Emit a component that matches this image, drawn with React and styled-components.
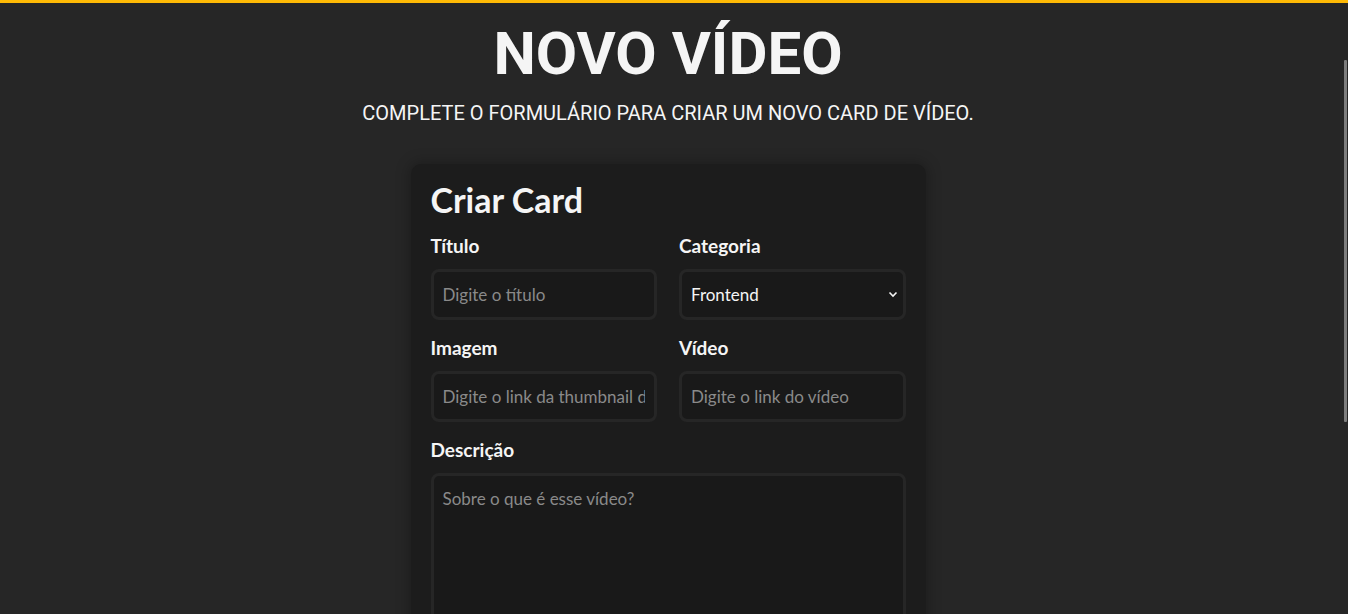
import styled, { createGlobalStyle } from "styled-components";

const GlobalStyle = createGlobalStyle`
  * {
    box-sizing: border-box;
  }

  body {
    margin: 0;
    background-color: #262626;
    color: #f5f5f5;
    font-family: "Lato", "Noto Sans", sans-serif;
  }
`;

function App() {
  return (
    <>
      <GlobalStyle />
      <Page>
        <Heading>
          <Title>NOVO VÍDEO</Title>
          <Subtitle>COMPLETE O FORMULÁRIO PARA CRIAR UM NOVO CARD DE VÍDEO.</Subtitle>
        </Heading>

        <Card>
          <CardTitle>Criar Card</CardTitle>

          <Grid>
            <Field>
              <Label>Título</Label>
              <Input placeholder="Digite o título" />
            </Field>

            <Field>
              <Label>Categoria</Label>
              <SelectWrap>
                <Select defaultValue="Frontend">
                  <option>Frontend</option>
                  <option>Backend</option>
                  <option>Mobile</option>
                </Select>
                <Chevron width="10" height="7" viewBox="0 0 10 7">
                  <path d="M1.5 1.5 L5 5 L8.5 1.5" fill="none" stroke="#f5f5f5" strokeWidth="1.6" />
                </Chevron>
              </SelectWrap>
            </Field>

            <Field>
              <Label>Imagem</Label>
              <Input placeholder="Digite o link da thumbnail do vídeo" />
            </Field>

            <Field>
              <Label>Vídeo</Label>
              <Input placeholder="Digite o link do vídeo" />
            </Field>

            <Field $wide>
              <Label>Descrição</Label>
              <TextArea placeholder="Sobre o que é esse vídeo?" />
            </Field>
          </Grid>

          <Buttons>
            <Button $primary>Guardar</Button>
            <Button>Limpar</Button>
          </Buttons>
        </Card>
      </Page>
      <ScrollThumb />
    </>
  );
}

export default App;

const Page = styled.main`
  min-height: 100vh;
  border-top: 3px solid #ffba05;
  display: flex;
  flex-direction: column;
  align-items: center;
  padding-right: 12px;
  padding-bottom: 160px;
`;

// the page's thin overlay scrollbar thumb
const ScrollThumb = styled.div`
  position: fixed;
  top: 60px;
  right: 1px;
  width: 3px;
  height: 362px;
  background-color: #7d7d7d;
  border-radius: 1px;
`;

const Heading = styled.header`
  display: flex;
  flex-direction: column;
  align-items: center;
  font-family: "Roboto", sans-serif;
`;

const Title = styled.h1`
  margin: 16px 0 0;
  font-size: 60px;
  font-weight: 700;
  line-height: 70px;
  color: #f5f5f5;
`;

const Subtitle = styled.p`
  margin: 12px 0 0;
  font-size: 20px;
  font-weight: 400;
  line-height: 24px;
  color: #f5f5f5;
`;

const Card = styled.section`
  width: 515px;
  margin-top: 39px;
  padding: 16px 20px 30px;
  background-color: #1c1c1c;
  border-radius: 10px;
  box-shadow: 0 0 14px 2px rgba(0, 0, 0, 0.25);
`;

const CardTitle = styled.h2`
  margin: 0 0 14px;
  font-size: 34px;
  font-weight: 700;
  line-height: 40px;
  color: #f5f5f5;
`;

const Grid = styled.div`
  display: grid;
  grid-template-columns: 1fr 1fr;
  column-gap: 22px;
  row-gap: 16px;
`;

const Field = styled.div`
  display: flex;
  flex-direction: column;
  gap: 11px;
  min-width: 0;
  grid-column: ${({ $wide }) => ($wide ? "1 / -1" : "auto")};
`;

const Label = styled.label`
  font-size: 19px;
  font-weight: 700;
  line-height: 24px;
  color: #f5f5f5;
`;

const Input = styled.input`
  width: 100%;
  height: 51px;
  padding: 0 9px;
  background-color: #191919;
  border: 3px solid #262626;
  border-radius: 8px;
  outline: none;
  color: #f5f5f5;
  font-family: inherit;
  font-size: 17px;

  &::placeholder {
    color: #8a8a8a;
  }
`;

const SelectWrap = styled.div`
  position: relative;
`;

const Select = styled.select`
  width: 100%;
  height: 51px;
  padding: 0 9px;
  appearance: none;
  background-color: #191919;
  border: 3px solid #262626;
  border-radius: 8px;
  outline: none;
  color: #f5f5f5;
  font-family: inherit;
  font-size: 17px;
`;

const Chevron = styled.svg`
  position: absolute;
  right: 8px;
  top: 22px;
  pointer-events: none;
`;

const TextArea = styled.textarea`
  width: 100%;
  height: 200px;
  padding: 12px 9px;
  resize: none;
  background-color: #191919;
  border: 3px solid #262626;
  border-radius: 8px;
  outline: none;
  color: #f5f5f5;
  font-family: inherit;
  font-size: 17px;

  &::placeholder {
    color: #8a8a8a;
  }
`;

const Buttons = styled.div`
  display: flex;
  gap: 20px;
  margin-top: 24px;
`;

const Button = styled.button`
  width: 160px;
  height: 50px;
  border-radius: 8px;
  border: 2px solid ${({ $primary }) => ($primary ? "#2271d1" : "#f5f5f5")};
  background-color: transparent;
  color: ${({ $primary }) => ($primary ? "#2271d1" : "#f5f5f5")};
  font-family: inherit;
  font-size: 18px;
  font-weight: 700;
`;
